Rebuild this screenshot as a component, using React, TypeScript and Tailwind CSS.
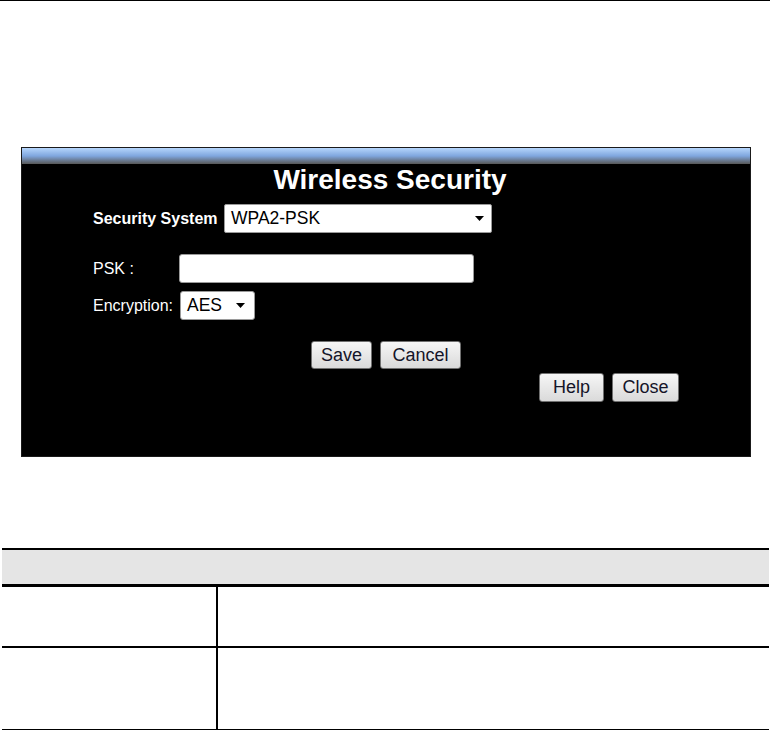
import React from "react";

const font = { fontFamily: '"Liberation Sans", Arial, sans-serif' };

function Caret() {
  return (
    <svg width="9" height="5" viewBox="0 0 9 5" className="shrink-0">
      <path d="M0 0 L9 0 L4.5 5 Z" fill="#000" />
    </svg>
  );
}

function Btn({ label, w, h }: { label: string; w: string; h: string }) {
  return (
    <div
      className={`${w} ${h} flex items-center justify-center rounded-[3px] border border-[#707070] bg-gradient-to-b from-[#f6f6f6] to-[#dadada] text-[18px] text-[#141428]`}
    >
      {label}
    </div>
  );
}

export default function App() {
  return (
    <div className="w-[772px] h-[730px] bg-white overflow-hidden" style={font}>
      <div className="w-[770px] border-t border-black" />
      <div className="ml-[21px] mt-[146px] w-[730px] h-[310px] border border-[#1a1a1a] bg-black flex flex-col">
        <div className="h-[16px] bg-gradient-to-b from-[#b6d6fc] via-[#7fa6de] to-[#585858]" />
        <div className="h-[32px] leading-[32px] text-center text-[28px] font-bold text-white pl-[8px]">
          Wireless Security
        </div>
        <div className="mt-[8px] flex items-center pl-[71px]">
          <div className="w-[131px] text-[16px] font-bold text-white">Security System</div>
          <div className="w-[268px] h-[29px] flex items-center justify-between rounded-[2px] border border-[#9a9a9a] bg-white pl-[6px] pr-[7px] text-[17.5px] text-black">
            <span>WPA2-PSK</span>
            <Caret />
          </div>
        </div>
        <div className="mt-[21px] flex items-center pl-[71px]">
          <div className="w-[86px] text-[16px] text-white">PSK :</div>
          <div className="w-[295px] h-[29px] rounded-[3px] border border-[#9a9a9a] bg-white" />
        </div>
        <div className="mt-[8px] flex items-center pl-[71px]">
          <div className="w-[87px] text-[16px] text-white">Encryption:</div>
          <div className="w-[75px] h-[29px] flex items-center justify-between rounded-[3px] border border-[#9a9a9a] bg-white pl-[6px] pr-[9px] text-[17.5px] text-black">
            <span>AES</span>
            <Caret />
          </div>
        </div>
        <div className="mt-[21px] flex items-center gap-[8px] pl-[289px]">
          <Btn label="Save" w="w-[61px]" h="h-[28px]" />
          <Btn label="Cancel" w="w-[81px]" h="h-[28px]" />
        </div>
        <div className="mt-[4px] flex items-center gap-[8px] pl-[517px]">
          <Btn label="Help" w="w-[65px]" h="h-[29px]" />
          <Btn label="Close" w="w-[67px]" h="h-[29px]" />
        </div>
      </div>
      <div className="ml-[2px] mt-[91px] w-[767px] border-t-2 border-black">
        <div className="h-[37px] bg-[#e5e5e5] border-b-[3px] border-black" />
        <div className="flex h-[61px] border-b-2 border-black">
          <div className="w-[216px] border-r-2 border-black" />
          <div className="flex-1" />
        </div>
        <div className="flex h-[83px] border-b-2 border-black">
          <div className="w-[216px] border-r-2 border-black" />
          <div className="flex-1" />
        </div>
      </div>
    </div>
  );
}
